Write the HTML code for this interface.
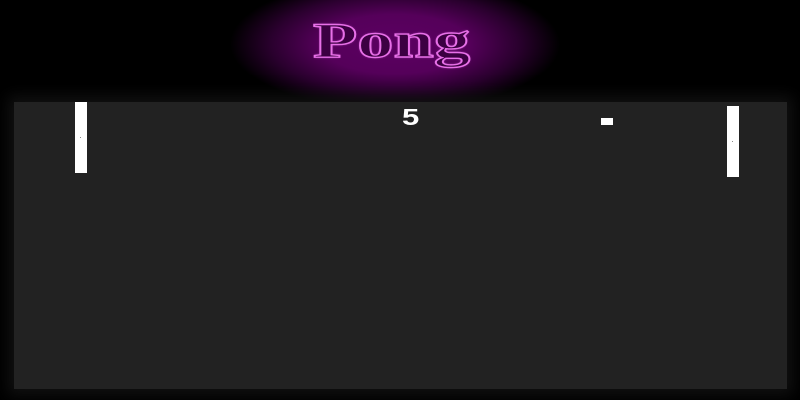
<!DOCTYPE html>
<html><head><style>
html,body{margin:0;padding:0;width:800px;height:400px;overflow:hidden;position:relative;
background:radial-gradient(ellipse 165px 66px at 395px 44px,#5c0062 0%,#55005a 45%,#2a002e 75%,#000 100%) , #000;}
.title{position:absolute;left:313px;top:5px;width:162px;font-family:"Liberation Serif",serif;font-weight:bold;font-size:50px;line-height:70px;color:#3c0042;-webkit-text-stroke:1.4px #e870e8;text-shadow:0 0 2px #c050c8;transform-origin:0 0;transform:scaleX(1.45);white-space:nowrap}
.board{position:absolute;left:14px;top:102px;width:773px;height:287px;background:#222;box-shadow:0 0 14px 6px #111}
.p{position:absolute;background:#fff;width:12px;height:71px}
.dot{position:absolute;left:5px;top:35px;width:1px;height:1px;background:#888}
.score{position:absolute;left:402px;top:104px;font-family:"Liberation Sans",sans-serif;font-size:23px;color:#fff;font-weight:bold;transform-origin:0 0;transform:scaleX(1.35)}
</style></head><body>
<div class="title">Pong</div>
<div class="board"></div>
<div class="p" style="left:75px;top:102px"><div class="dot"></div></div>
<div class="p" style="left:727px;top:106px"><div class="dot"></div></div>
<div class="p" style="left:601px;top:118px;width:12px;height:7px"></div>
<div class="score">5</div>
</body></html>
